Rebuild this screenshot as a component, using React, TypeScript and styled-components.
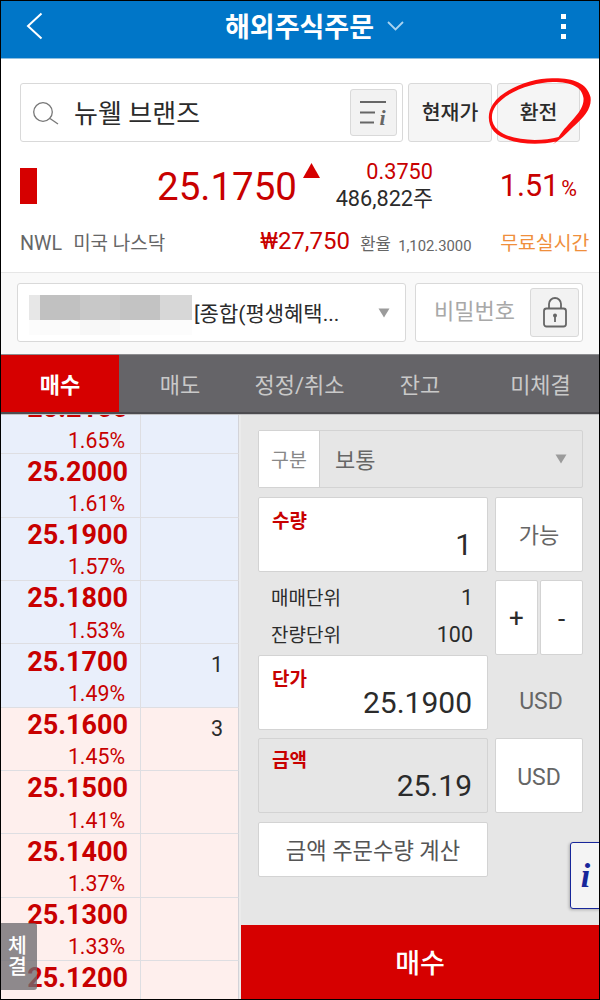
import React from 'react';
import styled, { createGlobalStyle, css } from 'styled-components';

const RED = '#c80000';

const GlobalStyle = createGlobalStyle`
  *, *::before, *::after { box-sizing: border-box; }
  body { margin: 0; background: #fff; }
  button { font: inherit; color: inherit; padding: 0; margin: 0; cursor: pointer; }
`;

const Screen = styled.div`
  position: relative;
  width: 600px;
  height: 1000px;
  border: 1px solid #000;
  overflow: hidden;
  display: flex;
  flex-direction: column;
  background: #fff;
  color: #2b2b2b;
  font-family: Roboto, 'Noto Sans CJK KR', sans-serif;
`;

/* Every label is one line; dy nudges the glyphs optically inside their line. */
const Label = styled.span<{ $size: number; $color?: string; $weight?: number; $dy?: number; $track?: number }>`
  display: block;
  white-space: nowrap;
  line-height: 1;
  font-size: ${(p) => p.$size}px;
  font-weight: ${(p) => p.$weight ?? 400};
  letter-spacing: ${(p) => p.$track ?? 0}px;
  color: ${(p) => p.$color ?? 'inherit'};
  transform: translateY(${(p) => p.$dy ?? 0}px);
`;

const Header = styled.header`
  flex: none;
  height: 58px;
  padding: 0 33px 7px 25px;
  display: grid;
  grid-template-columns: 60px 1fr 60px;
  align-items: center;
  background: #0076c8;
  border-bottom: 1px solid #8fbfdf;
`;

const Title = styled.h1`
  margin: 0;
  display: flex;
  align-items: center;
  justify-content: center;
  gap: 13px;
  padding-left: 37px;
  color: #fff;
`;

const Dots = styled.div`
  justify-self: end;
  display: grid;
  gap: 5px;
  i { display: block; width: 5px; height: 5px; background: #fff; }
`;

const SearchRow = styled.div`
  flex: none;
  display: flex;
  gap: 5px;
  height: 59px;
  margin: 24px 0 0 19px;
`;

const outlined = css`
  border: 1px solid #d9d9d9;
  border-radius: 3px;
`;

const SearchBox = styled.div`
  ${outlined}
  width: 383px;
  padding: 0 5px 0 12px;
  display: flex;
  align-items: center;
  background: #fff;
  & > :nth-child(2) { flex: 1; padding-left: 15px; }
`;

const IconButton = styled.button<{ $w: number; $h: number }>`
  ${outlined}
  flex: none;
  width: ${(p) => p.$w}px;
  height: ${(p) => p.$h}px;
  display: grid;
  place-items: center;
  background: #f2f2f2;
`;

const TopButton = styled.button`
  ${outlined}
  width: 84px;
  display: grid;
  place-items: center;
  background: #f5f5f5;
  & + & { width: 83px; }
`;

const Quote = styled.section`
  flex: none;
  height: 131px;
  padding: 14px 9px 0 19px;
  border-bottom: 1px solid #e6e6e6;
`;

const QuoteTop = styled.div`
  height: 59px;
  display: grid;
  grid-template-columns: 277px 24px 112px 144px;
  align-items: center;
`;

const PriceCell = styled.div`
  display: flex;
  align-items: center;
  justify-content: space-between;
`;

const Candle = styled.div`
  width: 17px;
  height: 36px;
  background: #d60000;
`;

const Triangle = styled.svg`
  display: block;
  margin: 0 0 31px 6px;
`;

const ChangeCell = styled.div`
  display: grid;
  justify-items: end;
  gap: 5px;
`;

const PercentCell = styled.div`
  display: flex;
  align-items: baseline;
  justify-content: flex-end;
  gap: 2px;
`;

const QuoteBottom = styled.div`
  height: 40px;
  display: flex;
  align-items: baseline;
  padding-top: 15px;
  & > :nth-child(2) { width: 198px; padding-left: 11px; }
  & > :nth-child(3) { width: 100px; }
  & > :nth-child(4) { width: 38px; }
  & > :nth-child(5) { width: 102px; }
`;

const AccountRow = styled.div`
  flex: none;
  height: 81px;
  padding: 10px 0 0 16px;
  display: flex;
  gap: 9px;
  background: #f9f9f9;
`;

const AccountBox = styled.div`
  ${outlined}
  width: 389px;
  height: 59px;
  padding: 0 15px 0 11px;
  display: flex;
  align-items: center;
  background: #fff;
  & > :nth-child(2) { flex: 1; padding-left: 2px; }
`;

const Mask = styled.div`
  align-self: start;
  margin-top: 11px;
  width: 163px;
  height: 40px;
  display: grid;
  grid-template: 25px 15px / 11px 40px 40px 40px 32px;
`;

const MaskCell = styled.i<{ $c: string }>`
  background: ${(p) => p.$c};
`;

const PasswordBox = styled.div`
  ${outlined}
  width: 168px;
  height: 59px;
  padding: 0 3px 0 18px;
  display: flex;
  align-items: center;
  justify-content: space-between;
  background: #fff;
`;

const Tabs = styled.nav`
  flex: none;
  height: 60px;
  display: grid;
  grid-template-columns: 118px 122px 117px 124px 117px;
  background: #656468;
  border-top: 1px solid #8d8d90;
  border-bottom: 2px solid #4d4c50;
`;

const Tab = styled.button<{ $active?: boolean }>`
  border: 0;
  display: grid;
  place-items: center;
  background: ${(p) => (p.$active ? '#d60000' : 'transparent')};
  color: ${(p) => (p.$active ? '#fff' : '#c9c9c9')};
`;

const Body = styled.main`
  flex: 1;
  min-height: 0;
  display: grid;
  grid-template-columns: 240px 1fr;
  background: #e6e6e6;
  border-top: 1px solid #c4c4c6;
`;

const Ladder = styled.div`
  position: relative;
  overflow: hidden;
  display: flex;
  flex-direction: column;
  justify-content: flex-end;
  border-right: 2px solid #ebebeb;
`;

const Level = styled.div<{ $bid?: boolean; $last?: boolean }>`
  flex: none;
  height: ${(p) => (p.$last ? '39.1px' : '63.35px')};
  overflow: hidden;
  display: grid;
  grid-template-columns: 139px 1fr;
  background: ${(p) => (p.$bid ? '#feefed' : '#e9effb')};
  border-top: 1px solid #dedee2;
  border-right: 1px solid #d3d3d8;
`;

const LevelPrice = styled.div`
  display: grid;
  grid-template-rows: 36px 27px;
  align-items: center;
  justify-items: end;
  padding-right: 12px;
  & > :nth-child(2) { padding-right: 3px; }
`;

const LevelQty = styled.div`
  border-left: 1px solid #dedee2;
  padding: 10px 15px 0 0;
  text-align: right;
`;

const TradeHandle = styled.button`
  position: absolute;
  left: 0;
  bottom: 9px;
  width: 36px;
  height: 67px;
  border: 0;
  border-radius: 0 3px 3px 0;
  background: rgba(110, 108, 113, 0.78);
  color: #fff;
  display: grid;
  align-content: center;
  justify-content: start;
  gap: 1px;
  padding-left: 7px;
`;

const OrderPane = styled.div`
  display: flex;
  flex-direction: column;
  justify-content: space-between;
`;

const Form = styled.div`
  display: grid;
  grid-template-columns: 230px 88px;
  grid-template-rows: 58px 75px 75px 75px 75px 55px;
  column-gap: 7px;
  padding: 15px 0 0 17px;
`;

const fieldBox = css`
  border: 1px solid #d3d3d3;
  border-radius: 2px;
  background: #fff;
`;

const KindSelect = styled.div`
  ${fieldBox}
  grid-column: 1 / -1;
  display: flex;
  align-items: center;
  background: #e6e6e6;
  padding-right: 15px;
  & > :nth-child(2) { flex: 1; padding-left: 15px; }
`;

const KindName = styled.div`
  align-self: stretch;
  width: 61px;
  display: grid;
  place-items: center;
  background: #fff;
  border-right: 1px solid #d0d0d0;
`;

const Field = styled.div<{ $muted?: boolean; $mt: number }>`
  ${fieldBox}
  margin-top: ${(p) => p.$mt}px;
  height: 75px;
  padding: 12px 15px 0 13px;
  display: grid;
  grid-template-rows: 20px 30px;
  background: ${(p) => (p.$muted ? '#e6e6e6' : '#fff')};
  & > :last-child { justify-self: end; }
`;

const SideButton = styled.button<{ $mt: number }>`
  ${fieldBox}
  margin-top: ${(p) => p.$mt}px;
  height: 75px;
  display: grid;
  place-items: center;
`;

const Units = styled.dl`
  margin: 17px 0 0;
  padding: 0 15px 0 13px;
  display: grid;
  grid-template-rows: 36px 36px;
`;

const UnitLine = styled.div`
  display: flex;
  justify-content: space-between;
  align-items: center;
`;

const Stepper = styled.div`
  margin-top: 17px;
  height: 75px;
  display: grid;
  grid-template-columns: 43px 43px;
  gap: 2px;
  button { ${fieldBox} display: grid; place-items: center; }
`;

const Currency = styled.div`
  height: 75px;
  margin: 26px 0 0 4px;
  display: grid;
  place-items: center;
`;

const CalcButton = styled.button`
  ${fieldBox}
  margin-top: 34px;
  height: 55px;
  display: grid;
  place-items: center;
`;

const BuyButton = styled.button`
  height: 74px;
  border: 0;
  background: #d60000;
  color: #fff;
  display: grid;
  place-items: center;
`;

const InfoTab = styled.button`
  position: absolute;
  right: -2px;
  top: 841px;
  width: 31px;
  height: 67px;
  border: 1.5px solid #17269a;
  border-radius: 3px 0 0 3px;
  background: #f4f4f4;
  box-shadow: -1px 1px 3px rgba(0, 0, 0, 0.25);
  color: #17269a;
  display: grid;
  place-items: center;
`;

const Marker = styled.svg`
  position: absolute;
  left: 485px;
  top: 71px;
  pointer-events: none;
`;

const SerifI = styled.span<{ $size: number }>`
  font: italic 700 ${(p) => p.$size}px/1 'Liberation Serif', serif;
`;

const Caret = () => (
  <svg width="12" height="10" viewBox="0 0 12 10">
    <path d="M0.5 0.5h11L6 9.5z" fill="#9b9b9b" />
  </svg>
);

const levels = [
  { price: '25.2100', rate: '1.65%' },
  { price: '25.2000', rate: '1.61%' },
  { price: '25.1900', rate: '1.57%' },
  { price: '25.1800', rate: '1.53%' },
  { price: '25.1700', rate: '1.49%', qty: '1' },
  { price: '25.1600', rate: '1.45%', qty: '3', bid: true },
  { price: '25.1500', rate: '1.41%', bid: true },
  { price: '25.1400', rate: '1.37%', bid: true },
  { price: '25.1300', rate: '1.33%', bid: true },
  { price: '25.1200', rate: '', bid: true },
];

const tabs = ['매수', '매도', '정정/취소', '잔고', '미체결'];
const maskColors = ['#e7e7e7', '#c1c1c1', '#c8c8c8', '#c3c3c3', '#d7d7d7', '#fcfcfc', '#fbfbfb', '#f8f8f8', '#fbfbfb', '#fcfcfc'];

export default function App() {
  return (
    <Screen>
      <GlobalStyle />
      <Header>
        <svg width="17" height="28" viewBox="0 0 17 28" fill="none" stroke="#fff" strokeWidth="2">
          <path d="M15.5 1.5 2 14l13.500 12.500" />
        </svg>
        <Title>
          <Label $size={27} $weight={700} $dy={1.5}>해외주식주문</Label>
          <svg width="17" height="10" viewBox="0 0 17 10" fill="none" stroke="#a9d3f0" strokeWidth="1.8">
            <path d="M1 1l7.500 7.500L16 1" />
          </svg>
        </Title>
        <Dots><i /><i /><i /></Dots>
      </Header>

      <SearchRow>
        <SearchBox>
          <svg width="26" height="24" viewBox="0 0 26 24" fill="none" stroke="#777" strokeWidth="1.3">
            <circle cx="10" cy="11" r="9.300" />
            <path d="M17 17.500l8 5.500" />
          </svg>
          <Label $size={26} $dy={1}>뉴웰 브랜즈</Label>
          <IconButton $w={47} $h={47}>
            <svg width="27" height="26" viewBox="0 0 27 26">
              <path d="M0 2h26M0 12.500h15M0 22.500h14" stroke="#666" strokeWidth="2.200" />
              <text x="19.500" y="24.500" fontFamily="Liberation Serif" fontStyle="italic" fontWeight="700" fontSize="22" fill="#666">i</text>
            </svg>
          </IconButton>
        </SearchBox>
        <TopButton><Label $size={20.5} $weight={500} $dy={1}>현재가</Label></TopButton>
        <TopButton><Label $size={20.5} $weight={500} $dy={1}>환전</Label></TopButton>
      </SearchRow>

      <Quote>
        <QuoteTop>
          <PriceCell>
            <Candle />
            <Label $size={38.5} $color={RED} $dy={2}>25.1750</Label>
          </PriceCell>
          <Triangle width="17" height="15" viewBox="0 0 17 15"><path d="M8.500 0 17 15H0z" fill="#d60000" /></Triangle>
          <ChangeCell>
            <Label $size={21.7} $color={RED}>0.3750</Label>
            <Label $size={21.7}>486,822주</Label>
          </ChangeCell>
          <PercentCell>
            <Label $size={30.5} $color={RED} $dy={1}>1.51</Label>
            <Label $size={21.5} $color={RED} $dy={1}>%</Label>
          </PercentCell>
        </QuoteTop>
        <QuoteBottom>
          <Label $size={19.7} $color="#666">NWL</Label>
          <Label $size={19} $color="#666">미국 나스닥</Label>
          <Label $size={24} $color={RED} $dy={-1}>₩27,750</Label>
          <Label $size={16.7} $color="#666">환율</Label>
          <Label $size={14.8} $color="#666" $dy={1}>1,102.3000</Label>
          <Label $size={19.4} $color="#ef8f3c">무료실시간</Label>
        </QuoteBottom>
      </Quote>

      <AccountRow>
        <AccountBox>
          <Mask>{maskColors.map((c, i) => <MaskCell key={i} $c={c} />)}</Mask>
          <Label $size={21} $dy={1.5}>[종합(평생혜택...</Label>
          <Caret />
        </AccountBox>
        <PasswordBox>
          <Label $size={22} $color="#a8a8a8" $dy={-1}>비밀번호</Label>
          <IconButton $w={49} $h={49}>
            <svg width="24" height="31" viewBox="0 0 24 31" fill="none" stroke="#666" strokeWidth="1.800">
              <rect x="1" y="11.500" width="22" height="18" rx="2.500" />
              <path d="M6 11V7a6 6 0 0 1 12 0v4" />
              <circle cx="12" cy="18.500" r="2" fill="#666" stroke="none" />
              <path d="M12 18v7" />
            </svg>
          </IconButton>
        </PasswordBox>
      </AccountRow>

      <Tabs>
        {tabs.map((t, i) => (
          <Tab key={t} $active={i === 0}>
            <Label $size={22} $weight={i === 0 ? 700 : 400} $dy={1.5}>{t}</Label>
          </Tab>
        ))}
      </Tabs>

      <Body>
        <Ladder>
          {levels.map((l, i) => (
            <Level key={l.price} $bid={l.bid} $last={i === levels.length - 1}>
              <LevelPrice>
                <Label $size={27} $weight={700} $color={RED}>{l.price}</Label>
                <Label $size={21.3} $color={RED}>{l.rate}</Label>
              </LevelPrice>
              <LevelQty>{l.qty && <Label $size={21.5}>{l.qty}</Label>}</LevelQty>
            </Level>
          ))}
          <TradeHandle>
            <Label $size={20.5} $weight={500}>체</Label>
            <Label $size={20.5} $weight={500}>결</Label>
          </TradeHandle>
        </Ladder>

        <OrderPane>
          <Form>
            <KindSelect>
              <KindName><Label $size={19.5} $color="#888" $dy={2}>구분</Label></KindName>
              <Label $size={22} $color="#666" $dy={1.5}>보통</Label>
              <Caret />
            </KindSelect>
            <Field $mt={9}>
              <Label $size={19} $weight={700} $color={RED} $dy={2}>수량</Label>
              <Label $size={30}>1</Label>
            </Field>
            <SideButton $mt={9}><Label $size={22} $color="#666" $dy={1}>가능</Label></SideButton>
            <Units>
              <UnitLine><Label $size={19}>매매단위</Label><Label $size={21.5}>1</Label></UnitLine>
              <UnitLine><Label $size={19} $dy={0.5}>잔량단위</Label><Label $size={21.5} $dy={1}>100</Label></UnitLine>
            </Units>
            <Stepper>
              <button><Label $size={26}>+</Label></button>
              <button><Label $size={26} $dy={1}>-</Label></button>
            </Stepper>
            <Field $mt={17}>
              <Label $size={19} $weight={700} $color={RED} $dy={2}>단가</Label>
              <Label $size={30}>25.1900</Label>
            </Field>
            <Currency><Label $size={23} $color="#666">USD</Label></Currency>
            <Field $mt={25} $muted>
              <Label $size={19} $weight={700} $color={RED}>금액</Label>
              <Label $size={30}>25.19</Label>
            </Field>
            <SideButton $mt={25}><Label $size={23} $color="#666" $dy={2}>USD</Label></SideButton>
            <CalcButton><Label $size={22.2} $color="#555" $dy={1.5}>금액 주문수량 계산</Label></CalcButton>
          </Form>
          <BuyButton><Label $size={27} $weight={500} $dy={2}>매수</Label></BuyButton>
        </OrderPane>
      </Body>

      <InfoTab><SerifI $size={34}>i</SerifI></InfoTab>

      <Marker width="108" height="76" viewBox="486 72 108 76">
        <path
          fill="#fb0d0d"
          fillRule="evenodd"
          d="M553 78.300C533 78 504 88 493 104C487 113 487.500 124 494 131.500C504 142 531 147 556 141.500L552.500 144.500C560 140 566 134 573 127C585 116 592 108 590.500 97C587 83 573 78 553 78.300ZM553 82C572 82 582 87 583.500 98C584.500 112 569 121 558.500 137C540 142 510 141 498 130C490.500 123 490 114 496 105.500C507 91 535 82 553 82Z"
        />
      </Marker>
    </Screen>
  );
}
